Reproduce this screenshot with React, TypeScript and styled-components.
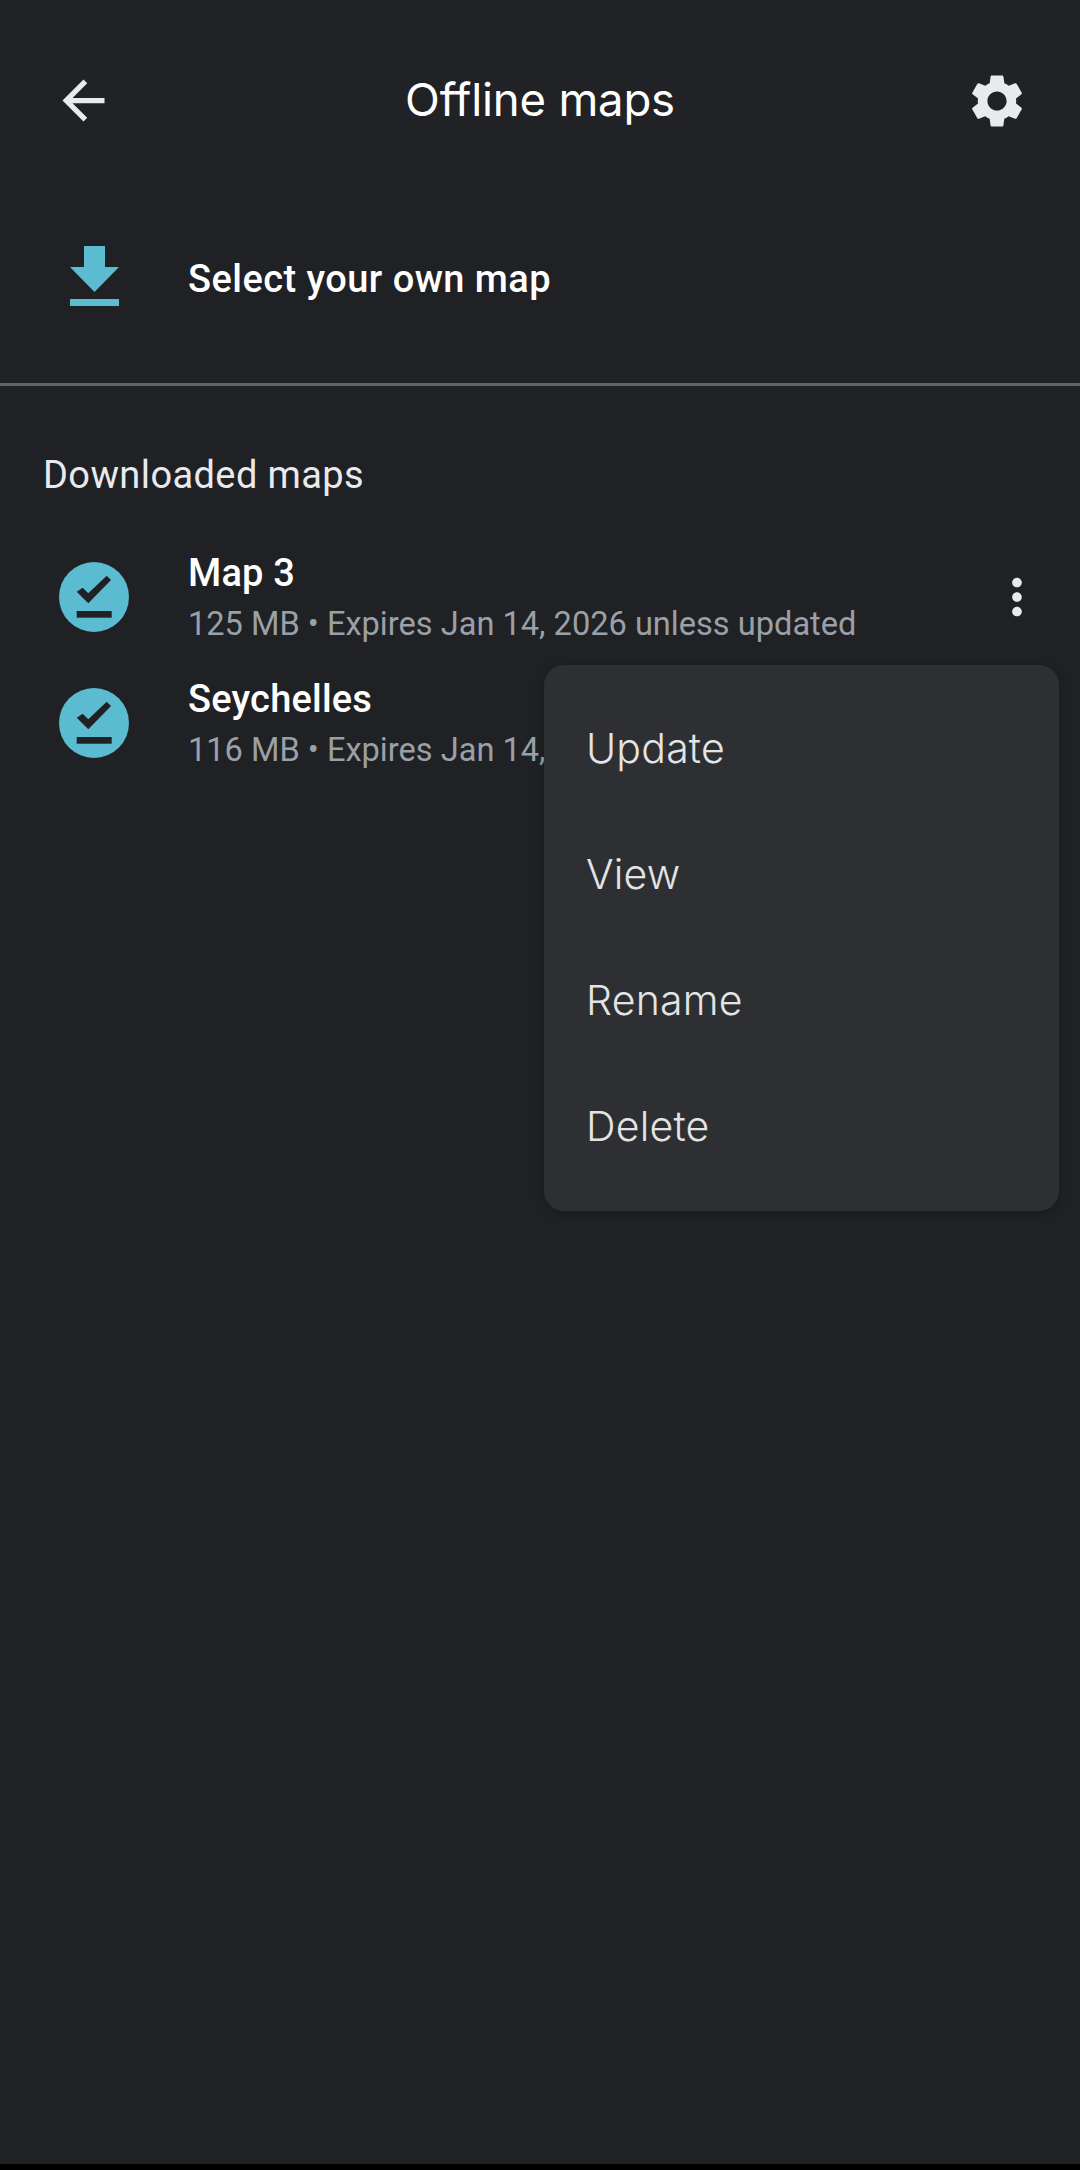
import React from "react";
import styled, { createGlobalStyle } from "styled-components";

const GlobalStyle = createGlobalStyle`
  html, body {
    margin: 0;
    padding: 0;
    background: #000;
  }
  body {
    font-family: Roboto, "Liberation Sans", sans-serif;
  }
`;

const Page = styled.div`
  position: relative;
  width: 1080px;
  height: 2164px;
  margin-bottom: 6px;
  background: #202124;
  overflow: hidden;
  display: flex;
  flex-direction: column;
`;

const Header = styled.header`
  height: 174px;
  flex: none;
  padding: 27px 51px 0 52px;
  box-sizing: border-box;
  display: flex;
  align-items: center;
  background: #212225;
`;

const Title = styled.h1`
  flex: 1;
  margin: -2px 0 0;
  text-align: center;
  font-family: Inter, Roboto, sans-serif;
  font-size: 45.5px;
  line-height: 56px;
  font-weight: 400;
  letter-spacing: -0.2px;
  color: #fff;
`;

const BackIcon = styled.svg`
  width: 63px;
  height: 63px;
  fill: #e8eaed;
  flex: none;
`;

const GearIcon = styled.svg`
  width: 64px;
  height: 64px;
  fill: #e8eaed;
  flex: none;
`;

const SelectRow = styled.div`
  height: 209px;
  flex: none;
  box-sizing: border-box;
  padding-bottom: 5px;
  display: flex;
  align-items: center;
`;

const IconSlot = styled.div`
  width: 188px;
  flex: none;
  display: flex;
  justify-content: center;
  align-items: center;
`;

const SelectLabel = styled.span`
  padding-top: 5px;
  font-size: 38px;
  font-weight: 500;
  line-height: 48px;
  letter-spacing: 0.45px;
  color: #fff;
`;

const Divider = styled.hr`
  margin: 0;
  border: 0;
  height: 3px;
  flex: none;
  background: #636467;
`;

const SectionTitle = styled.h2`
  margin: 0;
  height: 148px;
  flex: none;
  box-sizing: border-box;
  padding: 67px 0 0 43px;
  font-size: 38px;
  line-height: 44px;
  font-weight: 400;
  letter-spacing: 0.4px;
  color: #e8eaed;
`;

const MapList = styled.ul`
  margin: 0;
  padding: 0;
  list-style: none;
`;

const MapRow = styled.li`
  height: 126px;
  display: flex;
  align-items: center;
  padding-right: 34px;
`;

const MapText = styled.div`
  flex: 1;
  min-width: 0;
  padding-top: 4px;
`;

const MapName = styled.div`
  font-size: 38px;
  line-height: 48px;
  font-weight: 500;
  letter-spacing: 0.2px;
  color: #fff;
`;

const MapMeta = styled.div`
  margin-top: 2px;
  font-size: 32.6px;
  line-height: 50px;
  color: #9aa0a6;
  white-space: nowrap;
`;

const KebabIcon = styled.svg`
  width: 58px;
  height: 58px;
  fill: #e8eaed;
  flex: none;
`;

const Menu = styled.ul`
  position: absolute;
  left: 544px;
  top: 665px;
  width: 515px;
  margin: 0;
  padding: 21px 0;
  list-style: none;
  background: #2e2f33;
  border-radius: 20px;
  box-shadow: 0 2px 8px rgba(0, 0, 0, 0.25);
`;

const MenuItem = styled.li`
  height: 126px;
  padding: 0 0 2px 42px;
  box-sizing: border-box;
  display: flex;
  align-items: center;
  font-family: Inter, Roboto, sans-serif;
  font-size: 41px;
  font-weight: 300;
  letter-spacing: 0.2px;
  color: #e3e4e6;
`;

const DownloadGlyph = () => (
  <svg width="49" height="60" viewBox="0 0 49 60" fill="#5bbbd0">
    <path d="M14 0h21v21h14L24.5 46 0 21h14z" />
    <rect x="0" y="53" width="49" height="7" />
  </svg>
);

const DoneGlyph = () => (
  <svg width="70" height="70" viewBox="0 0 70 70">
    <circle cx="35" cy="35" r="35" fill="#5bbbd0" />
    <path d="M17.7 29.7l6-4 5.6 5.6L47.7 13.7 52 18 29.3 41.3z" fill="#202124" />
    <rect x="17.7" y="49" width="35" height="6.7" fill="#202124" />
  </svg>
);

const maps = [
  { name: "Map 3", meta: "125 MB • Expires Jan 14, 2026 unless updated" },
  { name: "Seychelles", meta: "116 MB • Expires Jan 14, 2026 unless updated" },
];

const menuItems = ["Update", "View", "Rename", "Delete"];

export default function App() {
  return (
    <>
      <GlobalStyle />
      <Page>
        <Header>
          <BackIcon viewBox="0 0 24 24">
            <path d="M20 11H7.83l5.59-5.59L12 4l-8 8 8 8 1.41-1.41L7.83 13H20v-2z" />
          </BackIcon>
          <Title>Offline maps</Title>
          <GearIcon viewBox="0 0 24 24">
            <path d="M19.14 12.94c.04-.3.06-.61.06-.94 0-.32-.02-.64-.07-.94l2.03-1.58c.18-.14.23-.41.12-.61l-1.92-3.32c-.12-.22-.37-.29-.59-.22l-2.39.96c-.5-.38-1.03-.7-1.62-.94l-.36-2.54c-.04-.24-.24-.41-.48-.41h-3.84c-.24 0-.43.17-.47.41l-.36 2.54c-.59.24-1.13.57-1.62.94l-2.39-.96c-.22-.08-.47 0-.59.22L2.74 8.87c-.12.21-.08.47.12.61l2.03 1.58c-.05.3-.09.63-.09.94s.02.64.07.94l-2.03 1.58c-.18.14-.23.41-.12.61l1.92 3.32c.12.22.37.29.59.22l2.39-.96c.5.38 1.03.7 1.62.94l.36 2.54c.05.24.24.41.48.41h3.84c.24 0 .44-.17.47-.41l.36-2.54c.59-.24 1.13-.56 1.62-.94l2.39.96c.22.08.47 0 .59-.22l1.92-3.32c.12-.22.07-.47-.12-.61l-2.01-1.58zM12 15.6c-1.98 0-3.6-1.62-3.6-3.6s1.62-3.6 3.6-3.6 3.6 1.62 3.6 3.6-1.62 3.6-3.6 3.6z" />
          </GearIcon>
        </Header>
        <SelectRow>
          <IconSlot>
            <DownloadGlyph />
          </IconSlot>
          <SelectLabel>Select your own map</SelectLabel>
        </SelectRow>
        <Divider />
        <SectionTitle>Downloaded maps</SectionTitle>
        <MapList>
          {maps.map((m) => (
            <MapRow key={m.name}>
              <IconSlot>
                <DoneGlyph />
              </IconSlot>
              <MapText>
                <MapName>{m.name}</MapName>
                <MapMeta>{m.meta}</MapMeta>
              </MapText>
              <KebabIcon viewBox="0 0 24 24">
                <path d="M12 8c1.1 0 2-.9 2-2s-.9-2-2-2-2 .9-2 2 .9 2 2 2zm0 2c-1.1 0-2 .9-2 2s.9 2 2 2 2-.9 2-2-.9-2-2-2zm0 6c-1.1 0-2 .9-2 2s.9 2 2 2 2-.9 2-2-.9-2-2-2z" />
              </KebabIcon>
            </MapRow>
          ))}
        </MapList>
        <Menu>
          {menuItems.map((item) => (
            <MenuItem key={item}>{item}</MenuItem>
          ))}
        </Menu>
      </Page>
    </>
  );
}
